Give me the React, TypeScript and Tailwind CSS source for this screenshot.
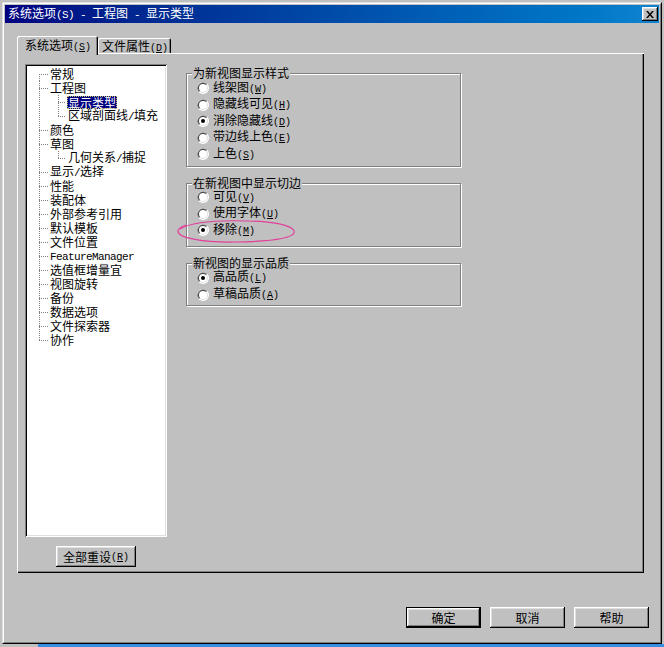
import React from 'react';

// SimSun-style half-width latin: 6px per character
const half = "font-['Liberation_Mono',monospace] text-[11px] tracking-[-0.6px] whitespace-pre";

function Txt({ s }: { s: string }) {
  const parts = s.match(/[\x20-\x7e]+|[^\x20-\x7e]+/g) ?? [];
  return (
    <>
      {parts.map((p, i) =>
        /^[\x20-\x7e]/.test(p) ? (
          <span key={i} className={half}>
            {p}
          </span>
        ) : (
          <span key={i}>{p}</span>
        )
      )}
    </>
  );
}

// access key in brackets, e.g. (W), with the letter underlined
function Key({ k }: { k: string }) {
  const cell = "inline-block w-[6px] text-center font-['Liberation_Mono',monospace] text-[10px]";
  return (
    <span className="whitespace-nowrap">
      <span className={cell}>(</span>
      <span className={`${cell} underline underline-offset-[1px]`}>{k}</span>
      <span className={cell}>)</span>
    </span>
  );
}

interface TreeItem {
  text: string;
  depth: 0 | 1;
  selected?: boolean;
  lastChild?: boolean;
}

const tree: TreeItem[] = [
  { text: '常规', depth: 0 },
  { text: '工程图', depth: 0 },
  { text: '显示类型', depth: 1, selected: true },
  { text: '区域剖面线/填充', depth: 1, lastChild: true },
  { text: '颜色', depth: 0 },
  { text: '草图', depth: 0 },
  { text: '几何关系/捕捉', depth: 1, lastChild: true },
  { text: '显示/选择', depth: 0 },
  { text: '性能', depth: 0 },
  { text: '装配体', depth: 0 },
  { text: '外部参考引用', depth: 0 },
  { text: '默认模板', depth: 0 },
  { text: '文件位置', depth: 0 },
  { text: 'FeatureManager', depth: 0 },
  { text: '选值框增量宜', depth: 0 },
  { text: '视图旋转', depth: 0 },
  { text: '备份', depth: 0 },
  { text: '数据选项', depth: 0 },
  { text: '文件探索器', depth: 0 },
  { text: '协作', depth: 0 },
];

function Lines({ w, top, bottom, arm = true }: { w: number; top: boolean; bottom: boolean; arm?: boolean }) {
  return (
    <svg width={w} height={14} className="block shrink-0" shapeRendering="crispEdges">
      <g stroke="#808080" strokeDasharray="1 1">
        {(top || bottom) && <line x1={0.5} x2={0.5} y1={top ? 0 : 7} y2={bottom ? 14 : 7} />}
        {arm && <line x1={0} x2={w - 1} y1={7.5} y2={7.5} />}
      </g>
    </svg>
  );
}

function TreeRow({ item, index }: { item: TreeItem; index: number }) {
  const first = index === 0;
  const last = index === tree.length - 1;
  return (
    <div className="flex h-[14px] items-center">
      {item.depth === 0 ? (
        <Lines w={10} top={!first} bottom={!last} />
      ) : (
        <>
          <Lines w={19} top bottom arm={false} />
          <Lines w={9} top bottom={!item.lastChild} />
        </>
      )}
      <span
        className={
          item.selected
            ? 'px-[1px] leading-[13px] bg-[#000080] text-white outline outline-dotted outline-[#c8c46a] -outline-offset-1'
            : 'px-[1px] whitespace-nowrap'
        }
      >
        <Txt s={item.text} />
      </span>
    </div>
  );
}

function Radio({ checked }: { checked?: boolean }) {
  return (
    <svg width={12} height={12} className="block shrink-0">
      <circle cx={6} cy={6} r={6} fill="#fff" />
      <path d="M1.76 10.24 A6 6 0 0 1 10.24 1.76 Z" fill="#808080" />
      <circle cx={6} cy={6} r={5} fill="#dfdfdf" />
      <path d="M2.46 9.54 A5 5 0 0 1 9.54 2.46 Z" fill="#404040" />
      <circle cx={6} cy={6} r={4} fill="#fff" />
      {checked && <circle cx={6} cy={6} r={2} fill="#000" />}
    </svg>
  );
}

interface Option {
  text: string;
  k: string;
  checked?: boolean;
}

function Group({
  title,
  options,
  box,
  row,
  children,
}: {
  title: string;
  options: Option[];
  box: string;
  row: string;
  children?: React.ReactNode;
}) {
  return (
    <div className={`relative border border-[#808080] shadow-[inset_1px_1px_0_#fff,1px_1px_0_#fff] pl-[10px] ${box}`}>
      <span className="absolute -top-[7px] left-[5px] px-[1px] leading-[12px] bg-[#c0c0c0] whitespace-nowrap">
        {title}
      </span>
      {options.map((o) => (
        <div key={o.text} className={`flex items-center gap-[4px] ${row}`}>
          <Radio checked={o.checked} />
          <span className="whitespace-nowrap leading-[12px]">
            {o.text}
            <Key k={o.k} />
          </span>
        </div>
      ))}
      {children}
    </div>
  );
}

const bevel =
  'bg-[#c0c0c0] shadow-[inset_-1px_-1px_0_#000,inset_1px_1px_0_#fff,inset_-2px_-2px_0_#808080,inset_2px_2px_0_#dfdfdf]';

function Button({ children, isDefault }: { children: React.ReactNode; isDefault?: boolean }) {
  return (
    <div
      className={`w-[75px] h-[21px] flex items-center justify-center ${bevel} ${
        isDefault ? 'border border-black' : ''
      }`}
    >
      {children}
    </div>
  );
}

export default function App() {
  return (
    <div className="w-[664px] h-[647px] bg-[#c0c0c0] flex flex-col overflow-hidden font-['Noto_Sans_CJK_SC',sans-serif] text-[12px] leading-[14px] text-black">
      {/* dialog window */}
      <div className="ml-[2px] mt-[2px] w-[660px] h-[642px] shrink-0 border border-t-[#dfdfdf] border-l-[#dfdfdf] border-r-black border-b-black">
        <div className="h-full border border-t-white border-l-white border-r-[#808080] border-b-[#808080] p-[1px] flex flex-col">
          {/* title bar */}
          <div className="h-[18px] shrink-0 flex items-center justify-between bg-linear-to-r from-[#000080] to-[#1084d0] pl-[3px] pr-[1px]">
            <span className="text-white whitespace-nowrap">
              <Txt s="系统选项(S) - 工程图 - 显示类型" />
            </span>
            <div className={`w-[16px] h-[14px] flex items-center justify-center ${bevel}`}>
              <svg width={8} height={7} viewBox="0 0 8 7" className="block">
                <path d="M0 0h2l2 2.4L6 0h2L5 3.5 8 7H6L4 4.6 2 7H0l3-3.5z" fill="#000" />
              </svg>
            </div>
          </div>

          {/* tabs */}
          <div className="mt-[13px] ml-[12px] h-[17px] flex items-end">
            <div className="relative z-10 -mb-[2px] h-[19px] w-[81px] pl-[8px] pt-[2px] bg-[#c0c0c0] rounded-t-[2px] shadow-[inset_1px_1px_0_#fff,inset_-1px_0_0_#000,inset_-2px_0_0_#808080] whitespace-nowrap">
              系统选项
              <Key k="S" />
            </div>
            <div className="h-[15px] w-[73px] pl-[4px] pt-[1px] rounded-t-[2px] shadow-[inset_1px_1px_0_#fff,inset_-1px_0_0_#000,inset_-2px_0_0_#808080] whitespace-nowrap">
              文件属性
              <Key k="D" />
            </div>
          </div>

          {/* tab page */}
          <div className="ml-[12px] w-[627px] h-[520px] shrink-0 flex pl-[8px] pt-[11px] shadow-[inset_1px_1px_0_#fff,inset_-1px_-1px_0_#000,inset_-2px_-2px_0_#808080]">
            <div className="w-[142px] flex flex-col items-center">
              <div className="w-full h-[473px] bg-white pl-[14px] pt-[3px] shadow-[inset_1px_1px_0_#808080,inset_-1px_-1px_0_#fff,inset_2px_2px_0_#000,inset_-2px_-2px_0_#dfdfdf]">
                {tree.map((item, i) => (
                  <TreeRow key={item.text} item={item} index={i} />
                ))}
              </div>
              <div className={`mt-[9px] w-[80px] h-[21px] flex items-center justify-center ${bevel}`}>
                全部重设
                <Key k="R" />
              </div>
            </div>

            <div className="ml-[19px] mt-[9px] w-[275px] flex flex-col gap-[16px]">
              <Group
                title="为新视图显示样式"
                box="h-[94px] pt-[6px]"
                row="h-[16.5px]"
                options={[
                  { text: '线架图', k: 'W' },
                  { text: '隐藏线可见', k: 'H' },
                  { text: '消除隐藏线', k: 'D', checked: true },
                  { text: '带边线上色', k: 'E' },
                  { text: '上色', k: 'S' },
                ]}
              />
              <Group
                title="在新视图中显示切边"
                box="h-[64px] pt-[5px]"
                row="h-[16.5px]"
                options={[
                  { text: '可见', k: 'V' },
                  { text: '使用字体', k: 'U' },
                  { text: '移除', k: 'M', checked: true },
                ]}
              >
                {/* pen mark around the chosen option */}
                <svg
                  width={120}
                  height={26}
                  className="absolute left-[-10px] top-[35px] pointer-events-none"
                >
                  <path
                    d="M9 6 C3 8, 0.5 10, 1 13 C3 19, 25 23.5, 58 23 C90 22.5, 114 20, 117 14 C119 8, 104 3, 72 2 C42 1, 16 2, 3 10"
                    fill="none"
                    stroke="#e2409a"
                    strokeWidth={1.2}
                  />
                </svg>
              </Group>
              <Group
                title="新视图的显示品质"
                box="h-[43px] pt-[5px]"
                row="h-[17px]"
                options={[
                  { text: '高品质', k: 'L', checked: true },
                  { text: '草稿品质', k: 'A' },
                ]}
              />
            </div>
          </div>

          {/* dialog buttons */}
          <div className="mt-[34px] mr-[10px] self-end flex gap-[9px]">
            <Button isDefault>确定</Button>
            <Button>取消</Button>
            <Button>帮助</Button>
          </div>
        </div>
      </div>

      {/* taskbar edge below the dialog */}
      <div className="flex h-[3px] shrink-0">
        <div className="w-[38px] bg-[#c0c0c0]" />
        <div className="flex-1 bg-[#3a8ee0]" />
      </div>
    </div>
  );
}
